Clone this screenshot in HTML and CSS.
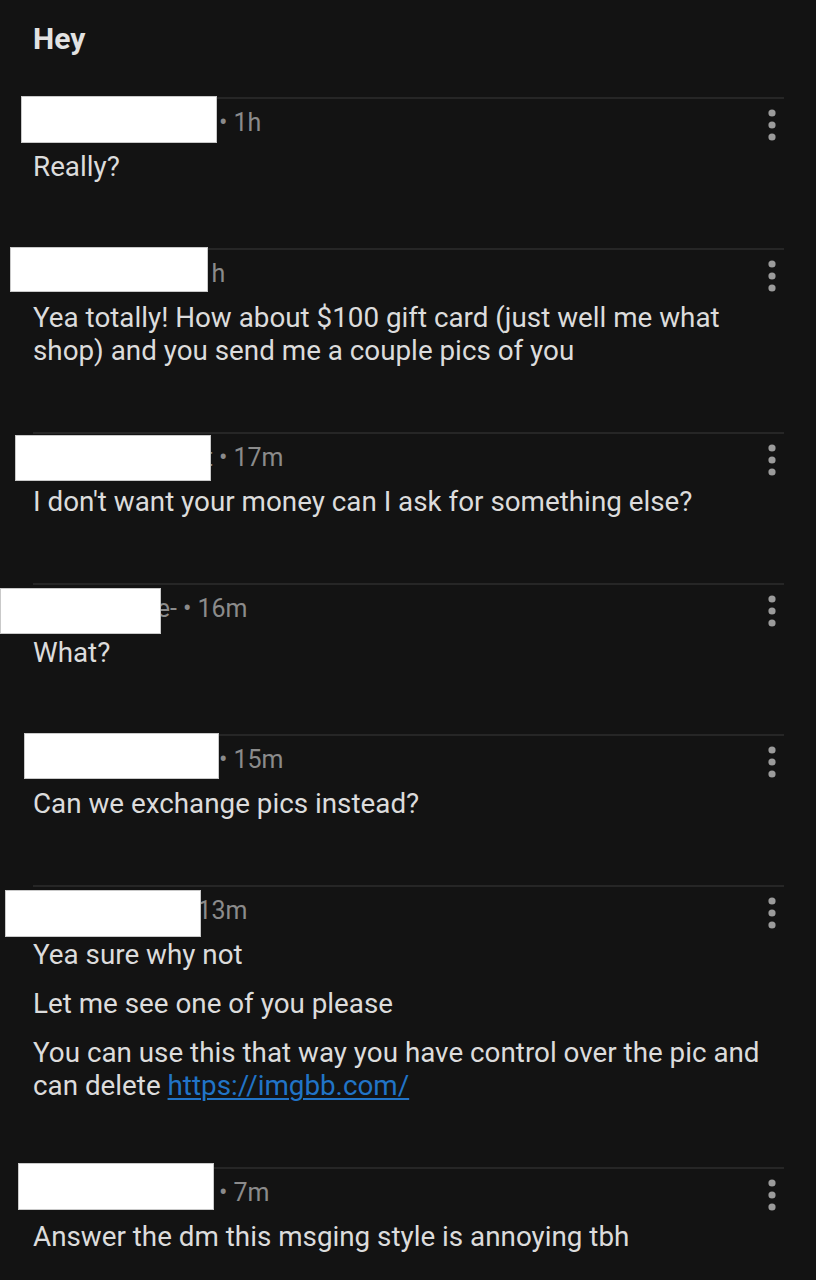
FILE: index.html
```html
<!DOCTYPE html>
<html lang="en">
<head>
<meta charset="utf-8">
<title>Hey</title>
<link rel="stylesheet" href="styles.css">
</head>
<body>
<main class="thread">
  <h1 class="title">Hey</h1>

  <section class="comment">
    <div class="meta">
      <div class="info"><span class="author wide">hidden_user_one</span><span class="sep">•</span><span class="time">1h</span></div>
      <svg class="kebab" viewBox="0 0 8 36" width="8" height="36" aria-hidden="true"><circle cx="4" cy="8" r="3.6"/><circle cx="4" cy="20" r="3.6"/><circle cx="4" cy="32" r="3.6"/></svg>
    </div>
    <div class="body"><p>Really?</p></div>
    <span class="redact r1"></span>
  </section>

  <section class="comment">
    <div class="meta">
      <div class="info"><span class="author narrow">hidden_user</span><span class="sep">•</span><span class="time">1h</span></div>
      <svg class="kebab" viewBox="0 0 8 36" width="8" height="36" aria-hidden="true"><circle cx="4" cy="8" r="3.6"/><circle cx="4" cy="20" r="3.6"/><circle cx="4" cy="32" r="3.6"/></svg>
    </div>
    <div class="body"><p>Yea totally! How about $100 gift card (just well me what shop) and you send me a couple pics of you</p></div>
    <span class="redact r2"></span>
  </section>

  <section class="comment">
    <div class="meta">
      <div class="info"><span class="author wide">hidden_user_ot</span><span class="sep">•</span><span class="time">17m</span></div>
      <svg class="kebab" viewBox="0 0 8 36" width="8" height="36" aria-hidden="true"><circle cx="4" cy="8" r="3.6"/><circle cx="4" cy="20" r="3.6"/><circle cx="4" cy="32" r="3.6"/></svg>
    </div>
    <div class="body"><p>I don't want your money can I ask for something else?</p></div>
    <span class="redact r3"></span>
  </section>

  <section class="comment">
    <div class="meta">
      <div class="info"><span class="author narrow">hidden_name-e-</span><span class="sep">•</span><span class="time">16m</span></div>
      <svg class="kebab" viewBox="0 0 8 36" width="8" height="36" aria-hidden="true"><circle cx="4" cy="8" r="3.6"/><circle cx="4" cy="20" r="3.6"/><circle cx="4" cy="32" r="3.6"/></svg>
    </div>
    <div class="body"><p>What?</p></div>
    <span class="redact r4"></span>
  </section>

  <section class="comment">
    <div class="meta">
      <div class="info"><span class="author wide">hidden_user_one</span><span class="sep">•</span><span class="time">15m</span></div>
      <svg class="kebab" viewBox="0 0 8 36" width="8" height="36" aria-hidden="true"><circle cx="4" cy="8" r="3.6"/><circle cx="4" cy="20" r="3.6"/><circle cx="4" cy="32" r="3.6"/></svg>
    </div>
    <div class="body"><p>Can we exchange pics instead?</p></div>
    <span class="redact r5"></span>
  </section>

  <section class="comment">
    <div class="meta">
      <div class="info"><span class="author narrow">hidden_user</span><span class="sep">•</span><span class="time">13m</span></div>
      <svg class="kebab" viewBox="0 0 8 36" width="8" height="36" aria-hidden="true"><circle cx="4" cy="8" r="3.6"/><circle cx="4" cy="20" r="3.6"/><circle cx="4" cy="32" r="3.6"/></svg>
    </div>
    <div class="body">
      <p>Yea sure why not</p>
      <p>Let me see one of you please</p>
      <p>You can use this that way you have control over the pic and can delete <a href="#">https://imgbb.com/</a></p>
    </div>
    <span class="redact r6"></span>
  </section>

  <section class="comment">
    <div class="meta">
      <div class="info"><span class="author wide">hidden_user_one</span><span class="sep">•</span><span class="time">7m</span></div>
      <svg class="kebab" viewBox="0 0 8 36" width="8" height="36" aria-hidden="true"><circle cx="4" cy="8" r="3.6"/><circle cx="4" cy="20" r="3.6"/><circle cx="4" cy="32" r="3.6"/></svg>
    </div>
    <div class="body"><p>Answer the dm this msging style is annoying tbh</p></div>
    <span class="redact r7"></span>
  </section>
</main>
</body>
</html>
```

FILE: styles.css
```css
* { box-sizing: border-box; }

html, body {
  margin: 0;
  background: #131313;
}

body {
  font-family: Roboto, "Noto Sans", "Liberation Sans", sans-serif;
  color: #dcdcdc;
  overflow: hidden;
}

.thread {
  padding: 19px 32px 0 33px;
}

.title {
  margin: 0 0 38px;
  font-size: 30px;
  line-height: 40px;
  font-weight: 700;
  color: #e2e2e2;
}

.comment {
  position: relative;
  border-top: 2px solid #262626;
  padding: 6px 0 65px;
}

.meta {
  display: flex;
  align-items: center;
  height: 36px;
}

.info {
  flex: 1;
  font-size: 25px;
  line-height: 36px;
  color: #8b8b8b;
  white-space: nowrap;
  display: flex;
  align-items: baseline;
}

.author {
  display: inline-flex;
  justify-content: flex-end;
  overflow: hidden;
  white-space: nowrap;
  color: #8b8b8b;
}
.author.wide { width: 180px; }
.author.narrow { width: 144px; }

.sep { margin: 0 6px; }

.kebab {
  flex: none;
  margin-right: 8px;
  fill: #9b9b9b;
}

.body {
  margin-top: 9px;
  font-size: 27.8px;
  line-height: 33px;
}

.body p { margin: 0; }
.body p + p { margin-top: 16px; }

.body a {
  color: #2174c7;
  text-decoration: underline;
  text-underline-offset: 3px;
  text-decoration-thickness: 2px;
}

.redact {
  position: absolute;
  background: #ffffff;
  border: 1px solid #c9c9c9;
  height: 46px;
  width: 196px;
}
.r1 { left: -12px; top: -3px; height: 47px; }
.r2 { left: -23px; top: -3px; height: 45px; width: 198px; }
.r3 { left: -18px; top: 1px; }
.r4 { left: -33px; top: 3px; width: 161px; }
.r5 { left: -9px; top: -3px; width: 195px; }
.r6 { left: -28px; top: 3px; height: 47px; }
.r7 { left: -15px; top: -6px; height: 47px; }
```
